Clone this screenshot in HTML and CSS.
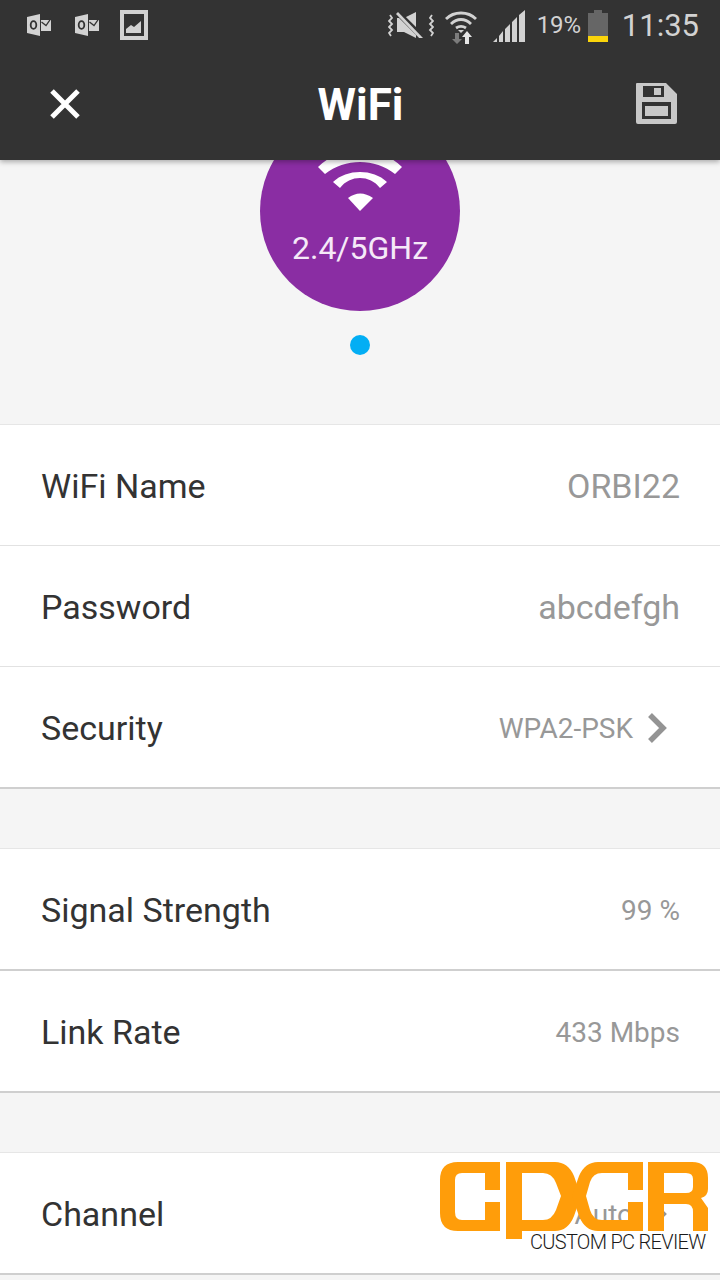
FILE: index.html
```html
<!DOCTYPE html>
<html lang="en">
<head>
<meta charset="utf-8">
<title>WiFi</title>
<link rel="stylesheet" href="styles.css">
</head>
<body>
<div class="phone">
  <header class="appbar">
    <div class="status">
      <div class="status-left">
        <svg class="ic-outlook" viewBox="0 0 24 22"><path class="f" d="M0 3 13 0V22L0 19Z"/><path class="f" d="M14 6H24V17H14Z"/><path d="M14.500 8 19 11.500 23.500 5" fill="none" stroke="#333" stroke-width="1.300"/><ellipse cx="6.500" cy="11" rx="2.800" ry="3.800" fill="none" stroke="#333" stroke-width="1.800"/></svg>
        <svg class="ic-outlook" viewBox="0 0 24 22"><path class="f" d="M0 3 13 0V22L0 19Z"/><path class="f" d="M14 6H24V17H14Z"/><path d="M14.500 8 19 11.500 23.500 5" fill="none" stroke="#333" stroke-width="1.300"/><ellipse cx="6.500" cy="11" rx="2.800" ry="3.800" fill="none" stroke="#333" stroke-width="1.800"/></svg>
        <svg class="ic-image" viewBox="0 0 28 30"><path class="f" fill-rule="evenodd" d="M0 0H28V30H0ZM4 4V26H24V4Z"/><path class="f" d="M6 23V19L11 15 14 17 21 11V23Z"/></svg>
      </div>
      <div class="status-right">
        <svg class="ic-vib" viewBox="0 0 46 26"><path class="f" d="M9 6H16L28 0V26L16 20H9Z"/><path d="M8 -1 36 27" stroke="#333" stroke-width="5.500"/><path d="M9 1 34 27" stroke="#d2d2d2" stroke-width="2.800"/><path d="M2 3 4 6 1 9 4 12 1 15 4 18 1 21 3 24M44 3 42 6 45 9 42 12 45 15 42 18 45 21 43 24" fill="none" stroke="#d2d2d2" stroke-width="1.800"/></svg>
        <svg class="ic-wifi" viewBox="0 0 34 36"><path d="M2 11C10 3 24 3 32 11M7 16C13 10 21 10 27 16M12 20C15 18 19 18 22 20" fill="none" stroke="#d2d2d2" stroke-width="2.800"/><path d="M14 22H20L17 25Z" fill="#d2d2d2"/><path d="M11 25H15V31H18L13 36 8 31H11Z" fill="#7c7c7c"/><path d="M21 36H25V29H28L23 23 18 29H21Z" fill="#e6e6e6"/></svg>
        <svg class="ic-signal" viewBox="0 0 32 32"><path class="f" d="M0 32 4 28V32ZM6 26 10 21V32H6ZM12 19 17 14V32H12ZM19 12 24 7V32H19ZM26 5 32 0V32H26Z"/></svg>
        <span class="pct">19%</span>
        <svg class="ic-batt" viewBox="0 0 20 32"><path d="M6 0H14V3H20V26H0V3H6Z" fill="#666"/><path d="M0 26H20V32H0Z" fill="#fbd50b"/></svg>
        <span class="clock">11:35</span>
      </div>
    </div>
    <div class="toolbar">
      <svg class="ic-close" viewBox="0 0 32 32"><path d="M3 3 29 29M29 3 3 29" stroke="#fff" stroke-width="5" fill="none"/></svg>
      <h1 class="title">WiFi</h1>
      <svg class="ic-save" viewBox="0 0 41 41"><path fill="#c8c8c8" fill-rule="evenodd" d="M1 0H30L41 11V39Q41 41 39 41H2Q0 41 0 39V1Q0 0 1 0ZM7 3V14H28V3ZM18 5H25V12H18ZM6 19V36H35V19ZM9 23H32V33H9Z"/></svg>
    </div>
  </header>

  <section class="hero">
    <div class="circle">
      <svg class="ic-bigwifi" viewBox="0 0 84 70"><path d="M0 24 7 31C27 15 57 15 77 31L84 24C62 2 22 2 0 24Z" fill="#fff"/><path d="M15 39 22 45C32 31.700 52 31.700 62 45L69 39C55 25.700 29 25.700 15 39Z" fill="#fff"/><path d="M30 55Q42 46 55 55L42 68Z" fill="#fff"/></svg>
      <span class="band">2.4/5GHz</span>
    </div>
    <span class="dot"></span>
  </section>

  <section class="group">
    <div class="row"><span class="label">WiFi Name</span><span class="value big">ORBI22</span></div>
    <div class="row"><span class="label">Password</span><span class="value big">abcdefgh</span></div>
    <div class="row end"><span class="label">Security</span><span class="value link">WPA2-PSK<svg class="ic-chev" viewBox="0 0 20 30"><path d="M3 2 16 15 3 28" fill="none" stroke="#949494" stroke-width="5.500"/></svg></span></div>
  </section>
  <div class="gap"></div>
  <section class="group">
    <div class="row end"><span class="label">Signal Strength</span><span class="value">99 %</span></div>
    <div class="row end"><span class="label">Link Rate</span><span class="value">433 Mbps</span></div>
  </section>
  <div class="gap"></div>
  <section class="group">
    <div class="row end"><span class="label">Channel</span><span class="value link">Auto<svg class="ic-chev" viewBox="0 0 20 30"><path d="M3 2 16 15 3 28" fill="none" stroke="#949494" stroke-width="5.500"/></svg></span></div>
  </section>

  <div class="watermark">
    <svg class="wm-mark" viewBox="0 0 270 80" role="img" aria-label="CPCR logo"><path fill="#ff9d0a" d="M18 2H60V30H45V13H22Q15 13 15 20V52Q15 60 22 60H45V42H60V71H18Q0 71 0 53V20Q0 2 18 2Z"/><path fill="#ff9d0a" fill-rule="evenodd" d="M66 2H115Q128 2 134 16L141 36 134 56Q128 71 115 71H82V79H66ZM82 13V60H103Q112 60 116 50L121 36 116 23Q112 13 103 13Z"/><path fill="#ff9d0a" fill-rule="evenodd" d="M158 2H203V30H188V13H162Q153 13 150 22L146 36 150 50Q153 60 162 60H188V42H203V71H158Q145 71 139 56L132 36 139 16Q145 2 158 2Z"/><path fill="#ff9d0a" fill-rule="evenodd" d="M208 2H252Q268 2 268 18V29Q268 36 261 38L268 48V71H253V52Q253 44 246 44H224V71H208ZM224 13V33H246Q253 33 253 27V19Q253 13 246 13Z"/></svg>
    <span class="wm-text">CUSTOM PC REVIEW</span>
  </div>
</div>
</body>
</html>
```
FILE: styles.css
```css
* { box-sizing: border-box; }
html, body { margin: 0; padding: 0; }
body { background: #f5f5f5; font-family: Roboto, "Liberation Sans", sans-serif; }
.phone { position: relative; width: 720px; height: 1280px; overflow: hidden; background: #f5f5f5; }
.f { fill: #d2d2d2; }

.appbar { position: relative; z-index: 2; height: 160px; background: #333; box-shadow: 0 2px 5px rgba(0,0,0,.3); }
.status { height: 50px; display: flex; justify-content: space-between; align-items: flex-start; padding: 8px 21px 0 27px; }
.status-left { display: flex; align-items: center; gap: 24px; height: 34px; }
.ic-outlook { width: 24px; height: 22px; }
.ic-image { width: 28px; height: 30px; margin-left: -3px; }
.status-right { display: flex; align-items: center; height: 34px; }
.ic-vib { width: 46px; height: 26px; margin-right: 10px; }
.ic-wifi { width: 34px; height: 36px; margin-right: 15px; margin-top: 2px; }
.ic-signal { width: 32px; height: 32px; margin-right: 12px; margin-top: 2px; }
.pct { font-size: 24px; color: #d2d2d2; letter-spacing: -.2px; margin-right: 7px; }
.ic-batt { width: 20px; height: 32px; margin-right: 14px; margin-top: 2px; }
.clock { font-size: 31px; color: #d2d2d2; }

.toolbar { height: 110px; display: flex; align-items: center; justify-content: space-between; padding: 0 43px 0 49px; }
.ic-close { width: 32px; height: 32px; margin-top: -2px; }
.ic-save { width: 41px; height: 41px; margin-top: -4px; }
.title { margin: 0 0 0 4px; font-size: 44px; font-weight: 700; color: #fff; line-height: 1; }

.hero { height: 265px; display: flex; flex-direction: column; align-items: center; border-bottom: 1px solid #e6e6e6; overflow: hidden; }
.circle { width: 200px; height: 200px; border-radius: 50%; background: #8a2da3; flex: none; margin-top: -49px; display: flex; flex-direction: column; align-items: center; }
.ic-bigwifi { width: 84px; height: 70px; margin-top: 32px; flex: none; }
.band { font-size: 32px; line-height: 36px; color: #f5e9f8; margin-top: 17px; }
.dot { width: 20px; height: 20px; border-radius: 50%; background: #03aef4; margin-top: 24px; flex: none; }

.group { background: #fff; }
.row { height: 121px; border-bottom: 1px solid #e2e2e2; display: flex; align-items: center; justify-content: space-between; padding: 2px 40px 0 41px; }
.row.end { border-bottom: 2px solid #cfcfcf; height: 122px; }
.label { font-size: 34px; color: #333; }
.value { font-size: 28px; color: #989898; display: flex; align-items: center; }
.value.big { font-size: 34px; }
.value.link { margin-right: 13px; }
.ic-chev { width: 20px; height: 30px; margin-left: 14px; }
.gap { height: 60px; border-bottom: 1px solid #e6e6e6; }

.watermark { position: absolute; left: 440px; top: 1160px; width: 270px; }
.wm-mark { display: block; width: 270px; height: 80px; }
.wm-text { position: absolute; left: 90px; top: 70px; font-family: Roboto, "Liberation Sans", sans-serif; font-weight: 300; font-size: 20px; letter-spacing: -.7px; color: #1a1a1a; white-space: nowrap; }
```
